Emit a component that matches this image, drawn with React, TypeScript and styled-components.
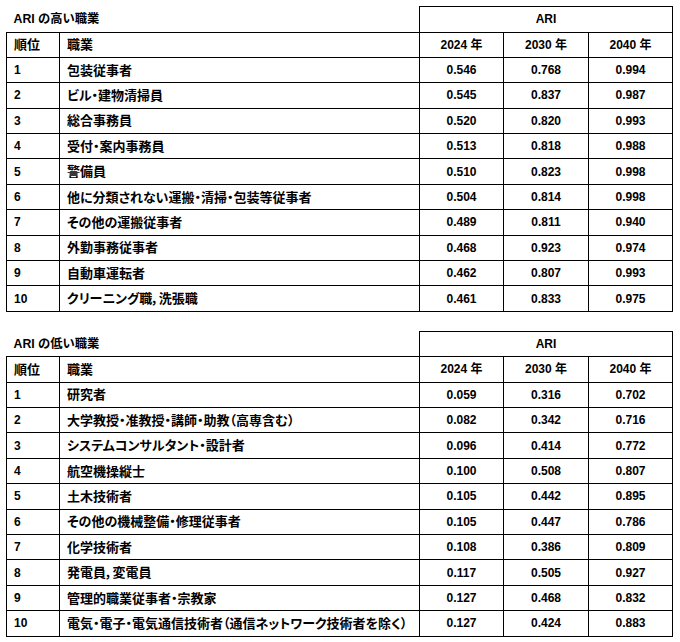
import React from "react";
import styled, { createGlobalStyle } from "styled-components";

const GlobalStyle = createGlobalStyle`
  html, body {
    margin: 0;
    padding: 0;
    background: #fff;
  }
  body {
    font-family: "Liberation Sans", "Noto Sans CJK JP", sans-serif;
    color: #000;
  }
`;

type Row = [number, string, string, string, string];

const highRows: Row[] = [
  [1, "包装従事者", "0.546", "0.768", "0.994"],
  [2, "ビル・建物清掃員", "0.545", "0.837", "0.987"],
  [3, "総合事務員", "0.520", "0.820", "0.993"],
  [4, "受付・案内事務員", "0.513", "0.818", "0.988"],
  [5, "警備員", "0.510", "0.823", "0.998"],
  [6, "他に分類されない運搬・清掃・包装等従事者", "0.504", "0.814", "0.998"],
  [7, "その他の運搬従事者", "0.489", "0.811", "0.940"],
  [8, "外勤事務従事者", "0.468", "0.923", "0.974"],
  [9, "自動車運転者", "0.462", "0.807", "0.993"],
  [10, "クリーニング職，洗張職", "0.461", "0.833", "0.975"],
];

const lowRows: Row[] = [
  [1, "研究者", "0.059", "0.316", "0.702"],
  [2, "大学教授・准教授・講師・助教（高専含む）", "0.082", "0.342", "0.716"],
  [3, "システムコンサルタント・設計者", "0.096", "0.414", "0.772"],
  [4, "航空機操縦士", "0.100", "0.508", "0.807"],
  [5, "土木技術者", "0.105", "0.442", "0.895"],
  [6, "その他の機械整備・修理従事者", "0.105", "0.447", "0.786"],
  [7, "化学技術者", "0.108", "0.386", "0.809"],
  [8, "発電員，変電員", "0.117", "0.505", "0.927"],
  [9, "管理的職業従事者・宗教家", "0.127", "0.468", "0.832"],
  [10, "電気・電子・電気通信技術者（通信ネットワーク技術者を除く）", "0.127", "0.424", "0.883"],
];

const years = ["2024 年", "2030 年", "2040 年"];

const Page = styled.div`
  padding: 6px 0 0 6px;
  display: flex;
  flex-direction: column;
  gap: 19px;
`;

const Table = styled.table`
  border-collapse: collapse;
  table-layout: fixed;
  width: 666px;
  font-size: 12px;
  font-weight: 700;
  font-feature-settings: "palt";
`;

const TitleRow = styled.tr`
  height: 25.5px;
`;

const BodyRow = styled.tr`
  height: 25.4px;
`;

const Cell = styled.td<{ $center?: boolean }>`
  border: 1px solid #000;
  padding: ${(p) => (p.$center ? "0" : "0 0 0 7px")};
  text-align: ${(p) => (p.$center ? "center" : "left")};
  vertical-align: middle;
  white-space: nowrap;
  overflow: hidden;
  line-height: 1;
`;

const TitleCell = styled.td`
  border: none;
  padding: 0 0 0 7px;
  vertical-align: middle;
  white-space: nowrap;
  line-height: 1;
  font-size: 12.3px;
`;

const JobText = styled.span`
  font-size: 13px;
`;

const RankingTable = ({ title, rows }: { title: string; rows: Row[] }) => (
  <Table>
    <colgroup>
      <col style={{ width: 53 }} />
      <col style={{ width: 360 }} />
      <col style={{ width: 84 }} />
      <col style={{ width: 85 }} />
      <col style={{ width: 84 }} />
    </colgroup>
    <thead>
      <TitleRow>
        <TitleCell colSpan={2}>{title}</TitleCell>
        <Cell as="th" colSpan={3} $center>
          ARI
        </Cell>
      </TitleRow>
      <BodyRow>
        <Cell as="th">
          <JobText>順位</JobText>
        </Cell>
        <Cell as="th">
          <JobText>職業</JobText>
        </Cell>
        {years.map((y) => (
          <Cell as="th" key={y} $center>
            {y}
          </Cell>
        ))}
      </BodyRow>
    </thead>
    <tbody>
      {rows.map(([rank, job, a, b, c]) => (
        <BodyRow key={rank}>
          <Cell>{rank}</Cell>
          <Cell>
            <JobText>{job}</JobText>
          </Cell>
          <Cell $center>{a}</Cell>
          <Cell $center>{b}</Cell>
          <Cell $center>{c}</Cell>
        </BodyRow>
      ))}
    </tbody>
  </Table>
);

export default function App() {
  return (
    <>
      <GlobalStyle />
      <Page>
        <RankingTable title="ARI の高い職業" rows={highRows} />
        <RankingTable title="ARI の低い職業" rows={lowRows} />
      </Page>
    </>
  );
}
